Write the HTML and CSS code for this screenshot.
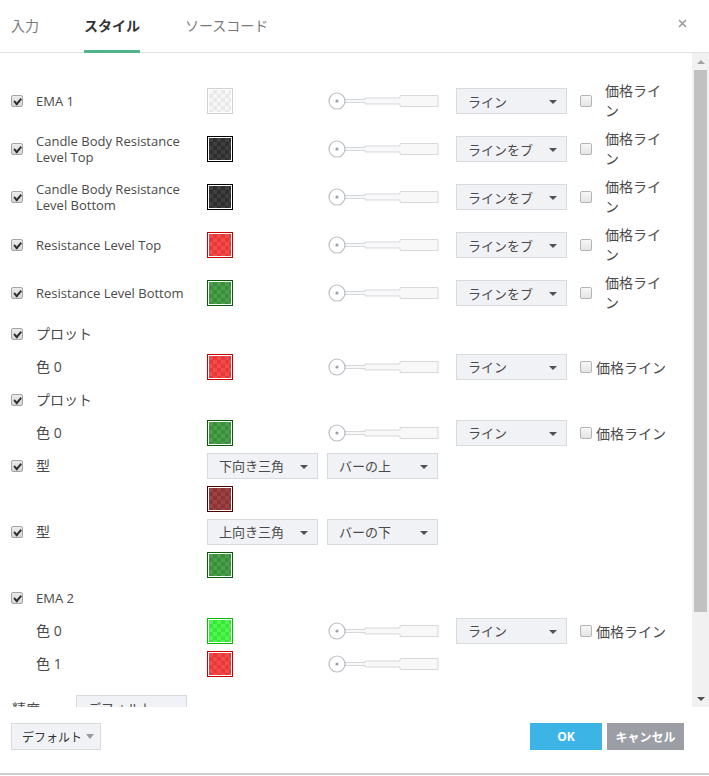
FILE: index.html
```html
<!DOCTYPE html>
<html>
  <head>
    <meta charset="utf-8">
    <link rel="stylesheet" href="styles.css">
  </head>
  <body>
    <div class="dialog">
      <div class="header">
        <div class="tabs">
          <div class="tab">入力</div>
          <div class="tab active">スタイル</div>
          <div class="tab">ソースコード</div>
        </div>
        <svg class="close" width="9" height="9" viewBox="0 0 9 9">
          <path d="M1 1L8 8M8 1L1 8" stroke="#9a9a9a" stroke-width="1.6"/>
        </svg>
      </div>

      <div class="body">
        <div class="content">
          <!-- plots with line width -->
          <div class="row">
            <div class="cb"><span class="check on"></span></div>
            <div class="name">EMA 1</div>
            <div class="color"><div class="swatch sw-clear"><div class="fill"></div></div></div>
            <div class="slider"><svg class="width-slider" width="111" height="18" viewBox="0 0 111 18"><polygon points="17,7.5 37,7.5 37,6 72,6 72,3.5 110,3.5 110,14.5 72,14.5 72,12 37,12 37,10.5 17,10.5"/><circle cx="9" cy="9" r="8"/><circle class="dot" cx="9" cy="9" r="1.6"/></svg></div>
            <div class="style"><div class="select">ライン</div></div>
            <div class="price"><span class="check"></span><span class="price-wrap">価格ライン</span></div>
          </div>
          <div class="row">
            <div class="cb"><span class="check on"></span></div>
            <div class="name">Candle Body Resistance Level Top</div>
            <div class="color"><div class="swatch sw-dark"><div class="fill"></div></div></div>
            <div class="slider"><svg class="width-slider" width="111" height="18" viewBox="0 0 111 18"><polygon points="17,7.5 37,7.5 37,6 72,6 72,3.5 110,3.5 110,14.5 72,14.5 72,12 37,12 37,10.5 17,10.5"/><circle cx="9" cy="9" r="8"/><circle class="dot" cx="9" cy="9" r="1.6"/></svg></div>
            <div class="style"><div class="select">ラインをブ</div></div>
            <div class="price"><span class="check"></span><span class="price-wrap">価格ライン</span></div>
          </div>
          <div class="row">
            <div class="cb"><span class="check on"></span></div>
            <div class="name">Candle Body Resistance Level Bottom</div>
            <div class="color"><div class="swatch sw-dark"><div class="fill"></div></div></div>
            <div class="slider"><svg class="width-slider" width="111" height="18" viewBox="0 0 111 18"><polygon points="17,7.5 37,7.5 37,6 72,6 72,3.5 110,3.5 110,14.5 72,14.5 72,12 37,12 37,10.5 17,10.5"/><circle cx="9" cy="9" r="8"/><circle class="dot" cx="9" cy="9" r="1.6"/></svg></div>
            <div class="style"><div class="select">ラインをブ</div></div>
            <div class="price"><span class="check"></span><span class="price-wrap">価格ライン</span></div>
          </div>
          <div class="row">
            <div class="cb"><span class="check on"></span></div>
            <div class="name">Resistance Level Top</div>
            <div class="color"><div class="swatch sw-red"><div class="fill"></div></div></div>
            <div class="slider"><svg class="width-slider" width="111" height="18" viewBox="0 0 111 18"><polygon points="17,7.5 37,7.5 37,6 72,6 72,3.5 110,3.5 110,14.5 72,14.5 72,12 37,12 37,10.5 17,10.5"/><circle cx="9" cy="9" r="8"/><circle class="dot" cx="9" cy="9" r="1.6"/></svg></div>
            <div class="style"><div class="select">ラインをブ</div></div>
            <div class="price"><span class="check"></span><span class="price-wrap">価格ライン</span></div>
          </div>
          <div class="row">
            <div class="cb"><span class="check on"></span></div>
            <div class="name">Resistance Level Bottom</div>
            <div class="color"><div class="swatch sw-green"><div class="fill"></div></div></div>
            <div class="slider"><svg class="width-slider" width="111" height="18" viewBox="0 0 111 18"><polygon points="17,7.5 37,7.5 37,6 72,6 72,3.5 110,3.5 110,14.5 72,14.5 72,12 37,12 37,10.5 17,10.5"/><circle cx="9" cy="9" r="8"/><circle class="dot" cx="9" cy="9" r="1.6"/></svg></div>
            <div class="style"><div class="select">ラインをブ</div></div>
            <div class="price"><span class="check"></span><span class="price-wrap">価格ライン</span></div>
          </div>

          <!-- plot groups -->
          <div class="row small">
            <div class="cb"><span class="check on"></span></div>
            <div class="name jp">プロット</div>
          </div>
          <div class="row small">
            <div class="cb"></div>
            <div class="name jp">色 0</div>
            <div class="color"><div class="swatch sw-red"><div class="fill"></div></div></div>
            <div class="slider"><svg class="width-slider" width="111" height="18" viewBox="0 0 111 18"><polygon points="17,7.5 37,7.5 37,6 72,6 72,3.5 110,3.5 110,14.5 72,14.5 72,12 37,12 37,10.5 17,10.5"/><circle cx="9" cy="9" r="8"/><circle class="dot" cx="9" cy="9" r="1.6"/></svg></div>
            <div class="style"><div class="select">ライン</div></div>
            <div class="price"><span class="check"></span><span class="price-inline">価格ライン</span></div>
          </div>
          <div class="row small">
            <div class="cb"><span class="check on"></span></div>
            <div class="name jp">プロット</div>
          </div>
          <div class="row small">
            <div class="cb"></div>
            <div class="name jp">色 0</div>
            <div class="color"><div class="swatch sw-green"><div class="fill"></div></div></div>
            <div class="slider"><svg class="width-slider" width="111" height="18" viewBox="0 0 111 18"><polygon points="17,7.5 37,7.5 37,6 72,6 72,3.5 110,3.5 110,14.5 72,14.5 72,12 37,12 37,10.5 17,10.5"/><circle cx="9" cy="9" r="8"/><circle class="dot" cx="9" cy="9" r="1.6"/></svg></div>
            <div class="style"><div class="select">ライン</div></div>
            <div class="price"><span class="check"></span><span class="price-inline">価格ライン</span></div>
          </div>

          <!-- shapes -->
          <div class="row small">
            <div class="cb"><span class="check on"></span></div>
            <div class="name jp">型</div>
            <div class="shape-selects">
              <div class="select">下向き三角</div>
              <div class="select">バーの上</div>
            </div>
          </div>
          <div class="row small">
            <div class="cb"></div>
            <div class="name"></div>
            <div class="color"><div class="swatch sw-maroon"><div class="fill"></div></div></div>
          </div>
          <div class="row small">
            <div class="cb"><span class="check on"></span></div>
            <div class="name jp">型</div>
            <div class="shape-selects">
              <div class="select">上向き三角</div>
              <div class="select">バーの下</div>
            </div>
          </div>
          <div class="row small">
            <div class="cb"></div>
            <div class="name"></div>
            <div class="color"><div class="swatch sw-green"><div class="fill"></div></div></div>
          </div>

          <!-- EMA 2 -->
          <div class="row small">
            <div class="cb"><span class="check on"></span></div>
            <div class="name">EMA 2</div>
          </div>
          <div class="row small">
            <div class="cb"></div>
            <div class="name jp">色 0</div>
            <div class="color"><div class="swatch sw-lime"><div class="fill"></div></div></div>
            <div class="slider"><svg class="width-slider" width="111" height="18" viewBox="0 0 111 18"><polygon points="17,7.5 37,7.5 37,6 72,6 72,3.5 110,3.5 110,14.5 72,14.5 72,12 37,12 37,10.5 17,10.5"/><circle cx="9" cy="9" r="8"/><circle class="dot" cx="9" cy="9" r="1.6"/></svg></div>
            <div class="style"><div class="select">ライン</div></div>
            <div class="price"><span class="check"></span><span class="price-inline">価格ライン</span></div>
          </div>
          <div class="row small">
            <div class="cb"></div>
            <div class="name jp">色 1</div>
            <div class="color"><div class="swatch sw-red"><div class="fill"></div></div></div>
            <div class="slider"><svg class="width-slider" width="111" height="18" viewBox="0 0 111 18"><polygon points="17,7.5 37,7.5 37,6 72,6 72,3.5 110,3.5 110,14.5 72,14.5 72,12 37,12 37,10.5 17,10.5"/><circle cx="9" cy="9" r="8"/><circle class="dot" cx="9" cy="9" r="1.6"/></svg></div>
          </div>

          <div class="row precision">
            <div class="precision-label">精度</div>
            <div class="select">デフォルト</div>
          </div>
        </div>

        <div class="scrollbar">
          <span class="sb-up"></span>
          <div class="sb-thumb"></div>
          <span class="sb-down"></span>
        </div>
      </div>

      <div class="footer">
        <div class="btn-default">デフォルト <span class="caret-down"></span></div>
        <div class="actions">
          <div class="btn btn-ok">OK</div>
          <div class="btn btn-cancel">キャンセル</div>
        </div>
      </div>
    </div>
  </body>
</html>
```
FILE: styles.css
```css
body {
  margin: 0;
  background: #fff;
  font-family: "Open Sans", "Noto Sans CJK JP", sans-serif;
  color: #4a4a4a;
}
.dialog {
  width: 709px;
  height: 776px;
  display: flex;
  flex-direction: column;
  overflow: hidden;
}

/* header */
.header {
  height: 52px;
  flex: none;
  border-bottom: 1px solid #e0e2e5;
  display: flex;
  justify-content: space-between;
  align-items: flex-start;
}
.tabs {
  display: flex;
  gap: 45px;
  padding-left: 11px;
}
.tab {
  height: 53px;
  box-sizing: border-box;
  border-bottom: 3px solid transparent;
  margin-bottom: -1px;
  display: flex;
  align-items: center;
  font-size: 14px;
  color: #7a7a7a;
}
.tab.active {
  color: #333;
  font-weight: bold;
  border-bottom-color: #4fb487;
}
.close {
  margin: 19px 22px 0 0;
}

/* body */
.body {
  flex: 1;
  display: flex;
  min-height: 0;
}
.content {
  flex: 1;
  overflow: hidden;
  padding: 24px 0 0 11px;
}
.row {
  display: flex;
  align-items: center;
  height: 48px;
}
.row.small {
  height: 33px;
}
.cb {
  width: 25px;
  flex: none;
  display: flex;
  align-items: center;
}
.name {
  width: 171px;
  flex: none;
  box-sizing: border-box;
  padding-right: 14px;
  font-size: 13px;
  line-height: 16px;
}
.name.jp {
  font-size: 14px;
}
.color {
  width: 121px;
  flex: none;
}
.slider {
  width: 128px;
  flex: none;
  display: flex;
}
.style {
  width: 124px;
  flex: none;
}
.price {
  display: flex;
  align-items: center;
  font-size: 14px;
}
.price-wrap {
  width: 60px;
  margin-left: 13px;
  line-height: 20px;
}
.price-inline {
  margin-left: 4px;
}

/* checkbox */
.check {
  display: inline-block;
  width: 12px;
  height: 12px;
  box-sizing: border-box;
  border: 1px solid #b4b4b4;
  border-radius: 2px;
  background: linear-gradient(#f7f7f7, #e4e4e4);
  position: relative;
}
.check.on {
  border-color: #a5a5a5;
  background: linear-gradient(#ececec, #d6d6d6);
}
.check.on::after {
  content: "";
  position: absolute;
  left: 2px;
  top: 1px;
  width: 6px;
  height: 3px;
  border-left: 2px solid #2f2f2f;
  border-bottom: 2px solid #2f2f2f;
  transform: rotate(-50deg) skewX(-8deg);
  transform-origin: 50% 60%;
  margin-top: 1px;
}

/* colour swatches */
.swatch {
  width: 26px;
  height: 26px;
  box-sizing: border-box;
  border: 1px solid var(--b);
  padding: 1px;
  background: #fff;
}
.swatch .fill {
  width: 100%;
  height: 100%;
  background: conic-gradient(var(--d) 25%, var(--c) 0 50%, var(--d) 0 75%, var(--c) 0) 0 0 / 8px 8px;
}
.sw-clear { --b: #d0d0d0; --c: #f6f6f6; --d: #e9e9e9; }
.sw-dark { --b: #000; --c: #3f3f3f; --d: #2e2e2e; }
.sw-red { --b: #c40000; --c: #f64a4a; --d: #e43a3a; }
.sw-green { --b: #0a5a0a; --c: #4aa04a; --d: #3c8d3c; }
.sw-maroon { --b: #500000; --c: #9c4242; --d: #8a3434; }
.sw-lime { --b: #00c000; --c: #4cf84c; --d: #3ce43c; }

/* line width slider */
.width-slider polygon {
  fill: #f8f8f8;
  stroke: #d4d7dc;
  stroke-width: 1;
}
.width-slider circle {
  fill: #fff;
  stroke: #b9bdc4;
  stroke-width: 1.2;
}
.width-slider circle.dot {
  fill: #9ea2a8;
  stroke: none;
}

/* selects */
.select {
  width: 111px;
  height: 26px;
  box-sizing: border-box;
  border: 1px solid #d7dade;
  background: #f1f2f5;
  padding-left: 11px;
  font-size: 13px;
  display: flex;
  align-items: center;
  position: relative;
  color: #4a4a4a;
}
.select::after {
  content: "";
  position: absolute;
  right: 9px;
  top: 11px;
  border-left: 4px solid transparent;
  border-right: 4px solid transparent;
  border-top: 4px solid #505050;
}
.shape-selects {
  display: flex;
  gap: 9px;
}
.row.precision {
  margin-top: 11px;
  height: 33px;
}
.precision-label {
  width: 64px;
  margin-left: 1px;
  font-size: 14px;
}

/* scrollbar */
.scrollbar {
  width: 17px;
  flex: none;
  background: #f1f1f1;
  display: flex;
  flex-direction: column;
  align-items: center;
}
.sb-up {
  margin-top: 7px;
  border-left: 4px solid transparent;
  border-right: 4px solid transparent;
  border-bottom: 4px solid #a3a3a3;
}
.sb-thumb {
  width: 13px;
  height: 542px;
  margin-top: 6px;
  background: #c1c1c1;
}
.sb-down {
  margin-top: auto;
  margin-bottom: 6px;
  border-left: 4px solid transparent;
  border-right: 4px solid transparent;
  border-top: 4px solid #505050;
}

/* footer */
.footer {
  height: 68px;
  flex: none;
  box-sizing: border-box;
  border-bottom: 2px solid #cdcdcd;
  margin-bottom: 1px;
  padding: 16px 25px 0 11px;
  display: flex;
  justify-content: space-between;
  align-items: flex-start;
}
.btn-default {
  width: 90px;
  height: 27px;
  box-sizing: border-box;
  border: 1px solid #d7dade;
  background: #f1f2f5;
  font-size: 12px;
  color: #333;
  display: flex;
  align-items: center;
  padding-left: 10px;
  gap: 4px;
}
.caret-down {
  border-left: 4px solid transparent;
  border-right: 4px solid transparent;
  border-top: 5px solid #9a9a9a;
}
.actions {
  display: flex;
  gap: 5px;
}
.btn {
  height: 27px;
  display: flex;
  align-items: center;
  justify-content: center;
  color: #fff;
  font-size: 12px;
  font-weight: bold;
}
.btn-ok {
  width: 72px;
  background: #3cb4e5;
}
.btn-cancel {
  width: 77px;
  background: #9b9ea4;
}
```
